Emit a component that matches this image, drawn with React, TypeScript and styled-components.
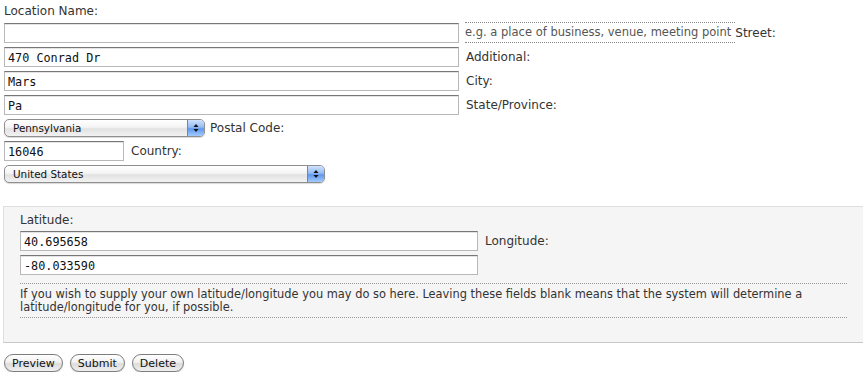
import styled, { createGlobalStyle } from "styled-components";

const GlobalStyle = createGlobalStyle`
  html, body {
    margin: 0;
    padding: 0;
    background: #fff;
    overflow: hidden;
  }
  body {
    font-family: "DejaVu Sans", Verdana, sans-serif;
    font-size: 12px;
    color: #333;
  }
`;

const Page = styled.form`
  padding: 3px 0 0 4px;
`;

const Label = styled.div`
  line-height: 17px;
  height: 19px;
  white-space: nowrap;
`;

const Row = styled.div<{ $gap?: number }>`
  display: flex;
  align-items: center;
  margin-bottom: 4px;
  gap: ${(p) => p.$gap ?? 7}px;
  white-space: nowrap;
`;

const TextInput = styled.input<{ $w: number }>`
  box-sizing: border-box;
  width: ${(p) => p.$w}px;
  height: 20px;
  margin: 0;
  padding: 1px 3px 0;
  border: 1px solid #b8b8b8;
  border-top-color: #777;
  box-shadow: inset 0 1px 0 #e4e4e4;
  background: #fff;
  font-family: "DejaVu Sans Mono", "Liberation Mono", monospace;
  font-size: 11.8px;
  color: #111;
  outline: none;
`;

const Hint = styled.span`
  font-size: 11.5px;
  color: #555;
  border-top: 1px dotted #888;
  border-bottom: 1px dotted #888;
  line-height: 19px;
  margin-left: -1px;
  padding-right: 4px;
`;

const Inline = styled.span`
  display: flex;
  align-items: center;
`;

const SelectBox = styled.div<{ $w: number }>`
  box-sizing: border-box;
  width: ${(p) => p.$w}px;
  height: 18px;
  display: flex;
  border: 1px solid #8e8e8e;
  border-radius: 5px;
  overflow: hidden;
  background: linear-gradient(#ffffff, #f4f4f4 45%, #e2e2e2 55%, #f2f2f2);
  box-shadow: 0 1px 1px rgba(0, 0, 0, 0.15);
  font-family: "DejaVu Sans", Verdana, sans-serif;
  font-size: 10.4px;
  color: #111;
`;

const SelectText = styled.span`
  flex: 1;
  padding-left: 8px;
  line-height: 16px;
`;

const SelectArrows = styled.span`
  width: 16px;
  border-left: 1px solid #6d86b8;
  background: linear-gradient(#cfe2fc, #94bbf4 45%, #5f98ee 55%, #a4cafb);
  display: flex;
  align-items: center;
  justify-content: center;
`;

const Fieldset = styled.div`
  margin: 23px 0 0 -1px;
  width: 880px;
  box-sizing: border-box;
  background: #f5f5f5;
  border: 1px solid #dedede;
  border-bottom-color: #c8c8c8;
  padding: 5px 0 24px 16px;
`;

const Note = styled.p`
  margin: 8px 0 0;
  width: 827px;
  border-top: 1px dotted #999;
  border-bottom: 1px dotted #999;
  padding: 4px 0 3px;
  font-size: 11.4px;
  line-height: 13px;
  color: #333;
`;

const Buttons = styled.div`
  display: flex;
  gap: 7px;
  margin-top: 11px;
`;

const Button = styled.button`
  height: 18px;
  padding: 0 7px;
  border: 1px solid #7d7d7d;
  border-radius: 9px;
  background: linear-gradient(#ffffff, #f1f1f1 45%, #dcdcdc 55%, #f0f0f0);
  box-shadow: 0 1px 1px rgba(0, 0, 0, 0.2);
  font-family: "DejaVu Sans", Verdana, sans-serif;
  font-size: 11px;
  color: #111;
  line-height: 15px;
`;

const Arrows = () => (
  <svg width="6" height="10" viewBox="0 0 6 10">
    <path d="M3 1 L5.5 4 L0.5 4 Z" fill="#111" />
    <path d="M3 9 L5.5 6 L0.5 6 Z" fill="#111" />
  </svg>
);

const Select = ({ w, value }: { w: number; value: string }) => (
  <SelectBox $w={w}>
    <SelectText>{value}</SelectText>
    <SelectArrows>
      <Arrows />
    </SelectArrows>
  </SelectBox>
);

export default function App() {
  return (
    <>
      <GlobalStyle />
      <Page>
        <Label>Location Name:</Label>
        <Row>
          <TextInput $w={455} defaultValue="" />
          <Inline>
            <Hint>e.g. a place of business, venue, meeting point</Hint>
            <span>Street:</span>
          </Inline>
        </Row>
        <Row>
          <TextInput $w={455} defaultValue="470 Conrad Dr" />
          <span>Additional:</span>
        </Row>
        <Row>
          <TextInput $w={455} defaultValue="Mars" />
          <span>City:</span>
        </Row>
        <Row>
          <TextInput $w={455} defaultValue="Pa" />
          <span>State/Province:</span>
        </Row>
        <Row $gap={5}>
          <Select w={201} value="Pennsylvania" />
          <span>Postal Code:</span>
        </Row>
        <Row>
          <TextInput $w={120} defaultValue="16046" />
          <span>Country:</span>
        </Row>
        <Row>
          <Select w={321} value="United States" />
        </Row>

        <Fieldset>
          <Label>Latitude:</Label>
          <Row>
            <TextInput $w={458} defaultValue="40.695658" />
            <span>Longitude:</span>
          </Row>
          <Row>
            <TextInput $w={458} defaultValue="-80.033590" />
          </Row>
          <Note>
            If you wish to supply your own latitude/longitude you may do so here. Leaving these
            fields blank means that the system will determine a latitude/longitude for you, if
            possible.
          </Note>
        </Fieldset>

        <Buttons>
          <Button type="button">Preview</Button>
          <Button type="button">Submit</Button>
          <Button type="button">Delete</Button>
        </Buttons>
      </Page>
    </>
  );
}
